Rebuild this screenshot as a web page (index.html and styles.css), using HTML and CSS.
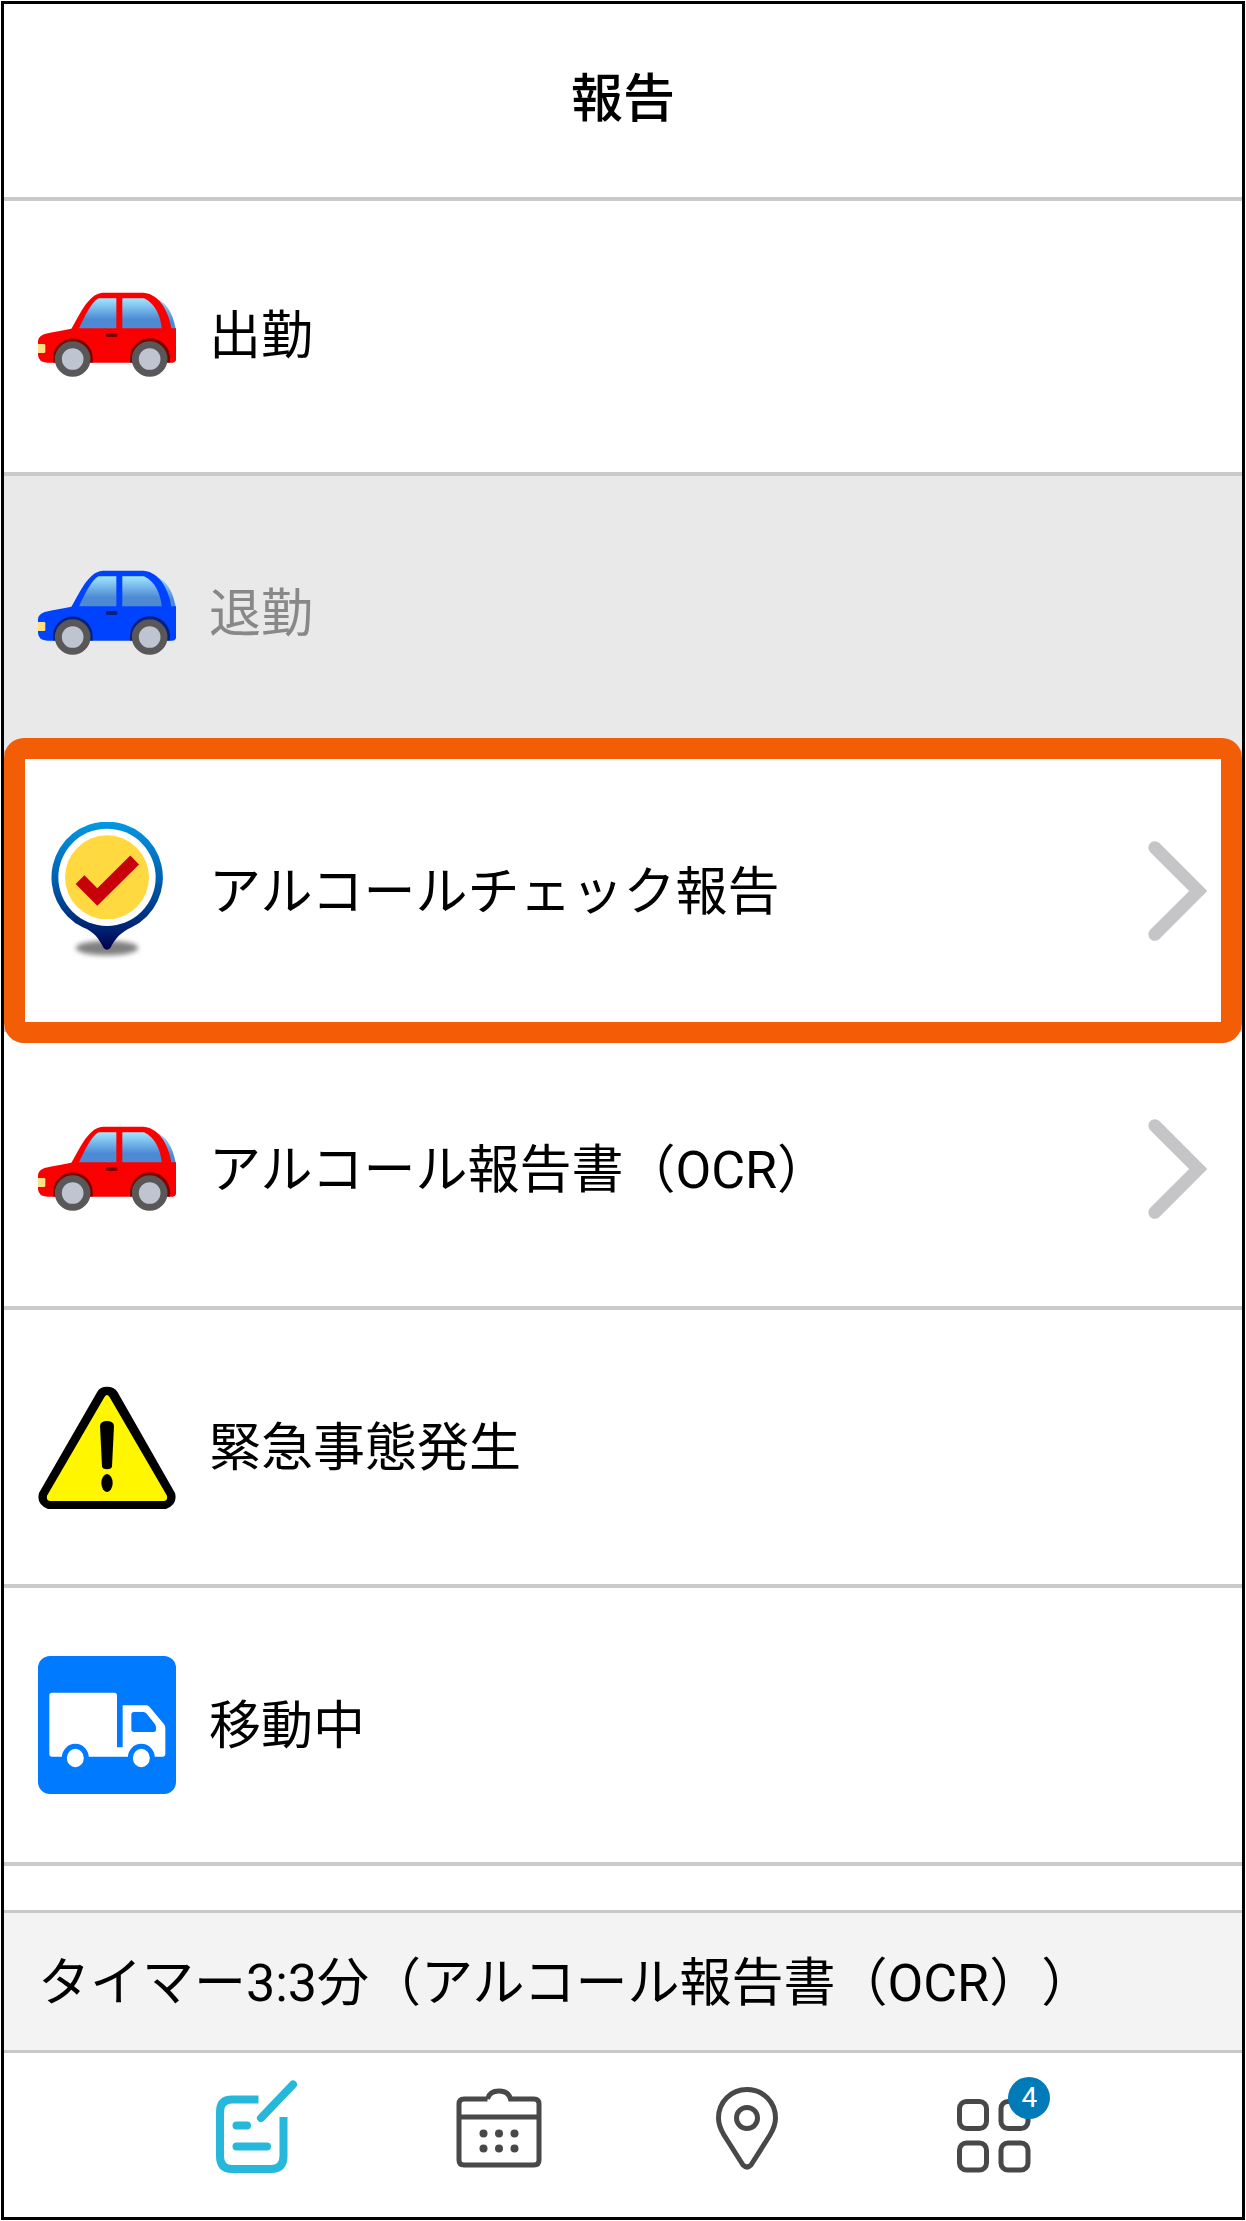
FILE: index.html
```
<!DOCTYPE html>
<html lang="ja">
<head>
    <meta charset="UTF-8">
    <meta name="viewport" content="width=device-width, initial-scale=1.0">
    <title>報告</title>
    <link rel="stylesheet" href="styles.css">
</head>
<body>
    <!-- Shared shapes: car and chevron -->
    <svg class="sprite" aria-hidden="true">
        <defs>
            <linearGradient id="glass" x1="0" y1="0" x2="0" y2="1">
                <stop offset="0" stop-color="#a0e6ff"/>
                <stop offset="0.7" stop-color="#4e8ad4"/>
            </linearGradient>
        </defs>
        <symbol id="car" viewBox="114 78 414 414">
            <path d="M440 172 C495 172 518 215 528 272 H480 Z" fill="url(#glass)"/>
            <path d="M114 302 Q116 288 134 282 C160 274 190 272 214 266 C232 240 262 160 308 158 H430 C484 162 508 225 514 265 H528 V361 Q526 368 518 368 H142 Q116 368 114 346 Z" fill="currentColor"/>
            <path d="M237 265 C254 230 274 186 296 175 H349 V265 Z" fill="url(#glass)"/>
            <path d="M367 175 H432 C466 190 482 230 485 265 H367 Z" fill="url(#glass)"/>
            <rect class="car-shade" x="318" y="279" width="34" height="12" rx="4"/>
            <rect x="112" y="312" width="24" height="27" rx="4" fill="#ffe082"/>
            <path class="car-shade" d="M159 368 V354 A59 58 0 0 1 278 354 V368 Z M390 368 V354 A59 58 0 0 1 510 354 V368 Z"/>
            <g fill="#bec5d0" stroke="#595757" stroke-width="21">
                <circle cx="218" cy="357" r="43"/>
                <circle cx="449" cy="357" r="43"/>
            </g>
        </symbol>
        <symbol id="chevron" viewBox="443 359 180 302">
            <path d="M463 379 L594 510 L463 641" fill="none" stroke="#c5c5c7" stroke-width="39" stroke-linecap="round"/>
        </symbol>
    </svg>

    <div class="app">
        <header class="header">
            <h1 class="title">報告</h1>
        </header>

        <main class="list">
            <button class="row" type="button">
                <svg class="row-icon car-red" aria-hidden="true"><use href="#car"/></svg>
                <span class="row-label">出勤</span>
            </button>

            <button class="row" type="button" disabled>
                <svg class="row-icon car-blue" aria-hidden="true"><use href="#car"/></svg>
                <span class="row-label">退勤</span>
            </button>

            <button class="row row-selected" type="button">
                <svg class="row-icon" viewBox="114 306 414 414" aria-hidden="true">
                    <defs>
                        <linearGradient id="pin" x1="0" y1="0" x2="0" y2="1">
                            <stop offset="0" stop-color="#0099e5"/>
                            <stop offset="0.45" stop-color="#0060b0"/>
                            <stop offset="0.85" stop-color="#002070"/>
                            <stop offset="1" stop-color="#00004a"/>
                        </linearGradient>
                        <filter id="soft" x="-30%" y="-60%" width="160%" height="220%">
                            <feGaussianBlur stdDeviation="8"/>
                        </filter>
                    </defs>
                    <ellipse cx="321" cy="684" rx="94" ry="22" fill="#808080" filter="url(#soft)"/>
                    <path d="M321 305 A167 167 0 0 1 395 622 C360 638 346 656 331 684 Q321 694 311 684 C296 656 284 636 248 622 A167 167 0 0 1 321 305 Z" fill="url(#pin)"/>
                    <circle cx="321" cy="472" r="146" fill="#fff"/>
                    <circle cx="321" cy="472" r="126" fill="#ffd93f"/>
                    <path d="M240 479 L292 531 L404 420" fill="none" stroke="#c7000b" stroke-width="37"/>
                </svg>
                <span class="row-label">アルコールチェック報告</span>
                <svg class="row-arrow" aria-hidden="true"><use href="#chevron"/></svg>
            </button>

            <button class="row" type="button">
                <svg class="row-icon car-red" aria-hidden="true"><use href="#car"/></svg>
                <span class="row-label">アルコール報告書（OCR）</span>
                <svg class="row-arrow" aria-hidden="true"><use href="#chevron"/></svg>
            </button>

            <button class="row" type="button">
                <svg class="row-icon" viewBox="114 57 414 414" aria-hidden="true">
                    <path d="M292 98 Q300 83 321 83 Q342 83 352 98 L525 402 Q534 436 498 450 H144 Q108 436 117 402 Z" fill="#000"/>
                    <path d="M313 115 Q321 101 329 115 L501 410 Q504 426 490 426 H152 Q138 426 141 410 Z" fill="#fff600"/>
                    <path d="M300 200 Q302 186 321 186 Q340 186 342 200 L336 322 Q335 331 321 331 Q307 331 306 322 Z"/>
                    <ellipse cx="321" cy="372" rx="17" ry="27"/>
                </svg>
                <span class="row-label">緊急事態発生</span>
            </button>

            <button class="row" type="button">
                <svg class="row-icon" viewBox="114 81 414 414" aria-hidden="true">
                    <rect x="114" y="81" width="414" height="414" rx="36" fill="#007aff"/>
                    <path d="M156 191 H343 Q351 191 351 199 V355 H368 V229 H438 Q445 229 449 234 L491 284 Q496 290 496 297 V376 Q496 383 489 383 H156 Q148 383 148 376 V199 Q148 191 156 191 Z" fill="#fff"/>
                    <path d="M402 249 H430 Q436 249 440 254 L464 284 Q468 289 468 295 V302 Q468 309 461 309 H402 Q394 309 394 301 V257 Q394 249 402 249 Z" fill="#007aff"/>
                    <g fill="#fff" stroke="#007aff" stroke-width="15">
                        <ellipse cx="226" cy="387" rx="33" ry="35"/>
                        <ellipse cx="424" cy="387" rx="33" ry="35"/>
                    </g>
                </svg>
                <span class="row-label">移動中</span>
            </button>
        </main>

        <div class="timer">タイマー3:3分（アルコール報告書（OCR））</div>

        <nav class="tabs">
            <a class="tab tab-active" href="#report" aria-label="報告">
                <svg class="tab-icon" viewBox="0 0 96 96">
                    <g fill="none" stroke="currentColor" stroke-width="8">
                        <path d="M51.500 22.500 H25 Q13 22.500 13 35 V79 Q13 92 25 92 H64 Q76.500 92 76.500 79 V40"/>
                        <path d="M86 7.500 L54 41 M29.500 48.500 H40 M29.500 69.500 H60" stroke-linecap="round"/>
                    </g>
                </svg>
            </a>
            <a class="tab" href="#calendar" aria-label="カレンダー">
                <svg class="tab-icon" viewBox="0 0 96 96">
                    <path d="M35.500 22 H12 Q7 22 7 27 V83 Q7 88 12 88 H82 Q87 88 87 83 V27 Q87 22 82 22 H58.500 C57 16 53 14 47 14 S37 16 35.500 22 M7 40 H87" fill="none" stroke="currentColor" stroke-width="5"/>
                    <g fill="currentColor">
                        <circle cx="31.500" cy="56.500" r="4"/>
                        <circle cx="47" cy="56.500" r="4"/>
                        <circle cx="62.500" cy="56.500" r="4"/>
                        <circle cx="31.500" cy="71.500" r="4"/>
                        <circle cx="47" cy="71.500" r="4"/>
                        <circle cx="62.500" cy="71.500" r="4"/>
                    </g>
                </svg>
            </a>
            <a class="tab" href="#map" aria-label="地図">
                <svg class="tab-icon" viewBox="0 0 96 96">
                    <g fill="none" stroke="currentColor" stroke-width="5">
                        <path d="M49 12.500 C33 12.500 20.500 25 20.500 41 C20.500 48 23 53 26 58 L45 88 Q49 92 53 88 L72 58 C75 53 77.500 48 77.500 41 C77.500 25 65 12.500 49 12.500 Z"/>
                        <circle cx="49" cy="41" r="10.500"/>
                    </g>
                </svg>
            </a>
            <a class="tab" href="#menu" aria-label="メニュー">
                <svg class="tab-icon" viewBox="0 0 96 96">
                    <g fill="none" stroke="currentColor" stroke-width="5">
                        <rect x="16.500" y="24.500" width="27" height="27" rx="7"/>
                        <rect x="58" y="24.500" width="27" height="27" rx="7"/>
                        <rect x="16.500" y="66" width="27" height="27" rx="7"/>
                        <rect x="58" y="66" width="27" height="27" rx="7"/>
                    </g>
                </svg>
                <span class="badge">4</span>
            </a>
        </nav>
    </div>
</body>
</html>
```

FILE: styles.css
```
* {
    box-sizing: border-box;
}

body {
    margin: 0;
    padding: 1px;
    background-color: #fff;
    color: #000;
    font-family: Roboto, "Noto Sans CJK JP", sans-serif;
    font-size: 52px;
    line-height: 76px;
    text-spacing-trim: space-all; /* keep full-width brackets apart */
}

.sprite {
    position: absolute;
    width: 0;
    height: 0;
}

.app {
    display: flex;
    flex-direction: column;
    height: calc(100vh - 2px);
    border: 3px solid #000;
}

/* Header */
.header {
    flex: none;
    padding: 58px 24px 59px;
    text-align: center;
}

.title {
    margin: 0;
    font-size: inherit;
    font-weight: 500;
}

/* Report list */
.list {
    flex: 1;
    min-height: 0;
    overflow: hidden;
    border-top: 4px solid #cacaca;
}

.row {
    display: flex;
    align-items: center;
    gap: 33px;
    position: relative;
    width: 100%;
    padding: 68px 34px;
    border: none;
    border-bottom: 4px solid #cacaca;
    background-color: #fff;
    color: inherit;
    font: inherit;
    text-align: left;
}

.row:first-child {
    padding-top: 65px;
}

.row:disabled {
    background-color: #e9e9e9;
    color: #888;
}

.row-icon {
    flex: none;
    width: 138px;
    height: 138px;
}

.row-label {
    flex: 1;
    padding-top: 4px;
}

.row-arrow {
    flex: none;
    width: 60px;
    height: 100px;
}

/* Thick frame that lies over the neighbouring rows */
.row-selected {
    z-index: 1;
}

.row-selected::after {
    content: "";
    position: absolute;
    inset: -16px 0 -15px;
    border: 21px solid #f35d05;
    border-radius: 20px;
}

.car-red {
    color: #fa0000;
}

.car-blue {
    color: #0043ff;
}

.car-shade {
    fill: #000;
    fill-opacity: 0.5;
}

/* Timer */
.timer {
    flex: none;
    padding: 33px 34px 28px;
    border-top: 3px solid #c8c8c8;
    border-bottom: 3px solid #c8c8c8;
    background-color: #f3f3f3;
}

/* Bottom tabs */
.tabs {
    display: flex;
    flex: none;
    padding: 24px 128px 44px;
}

.tab {
    display: flex;
    flex: 1;
    justify-content: center;
    position: relative;
    color: #484848;
}

.tab-active {
    color: #26b8da;
}

.tab-icon {
    width: 96px;
    height: 96px;
}

.badge {
    position: absolute;
    top: 0;
    left: calc(50% + 17px);
    width: 42px;
    height: 42px;
    border-radius: 50%;
    background-color: #007bb8;
    color: #fff;
    font-size: 28px;
    line-height: 42px;
    text-align: center;
}
```
